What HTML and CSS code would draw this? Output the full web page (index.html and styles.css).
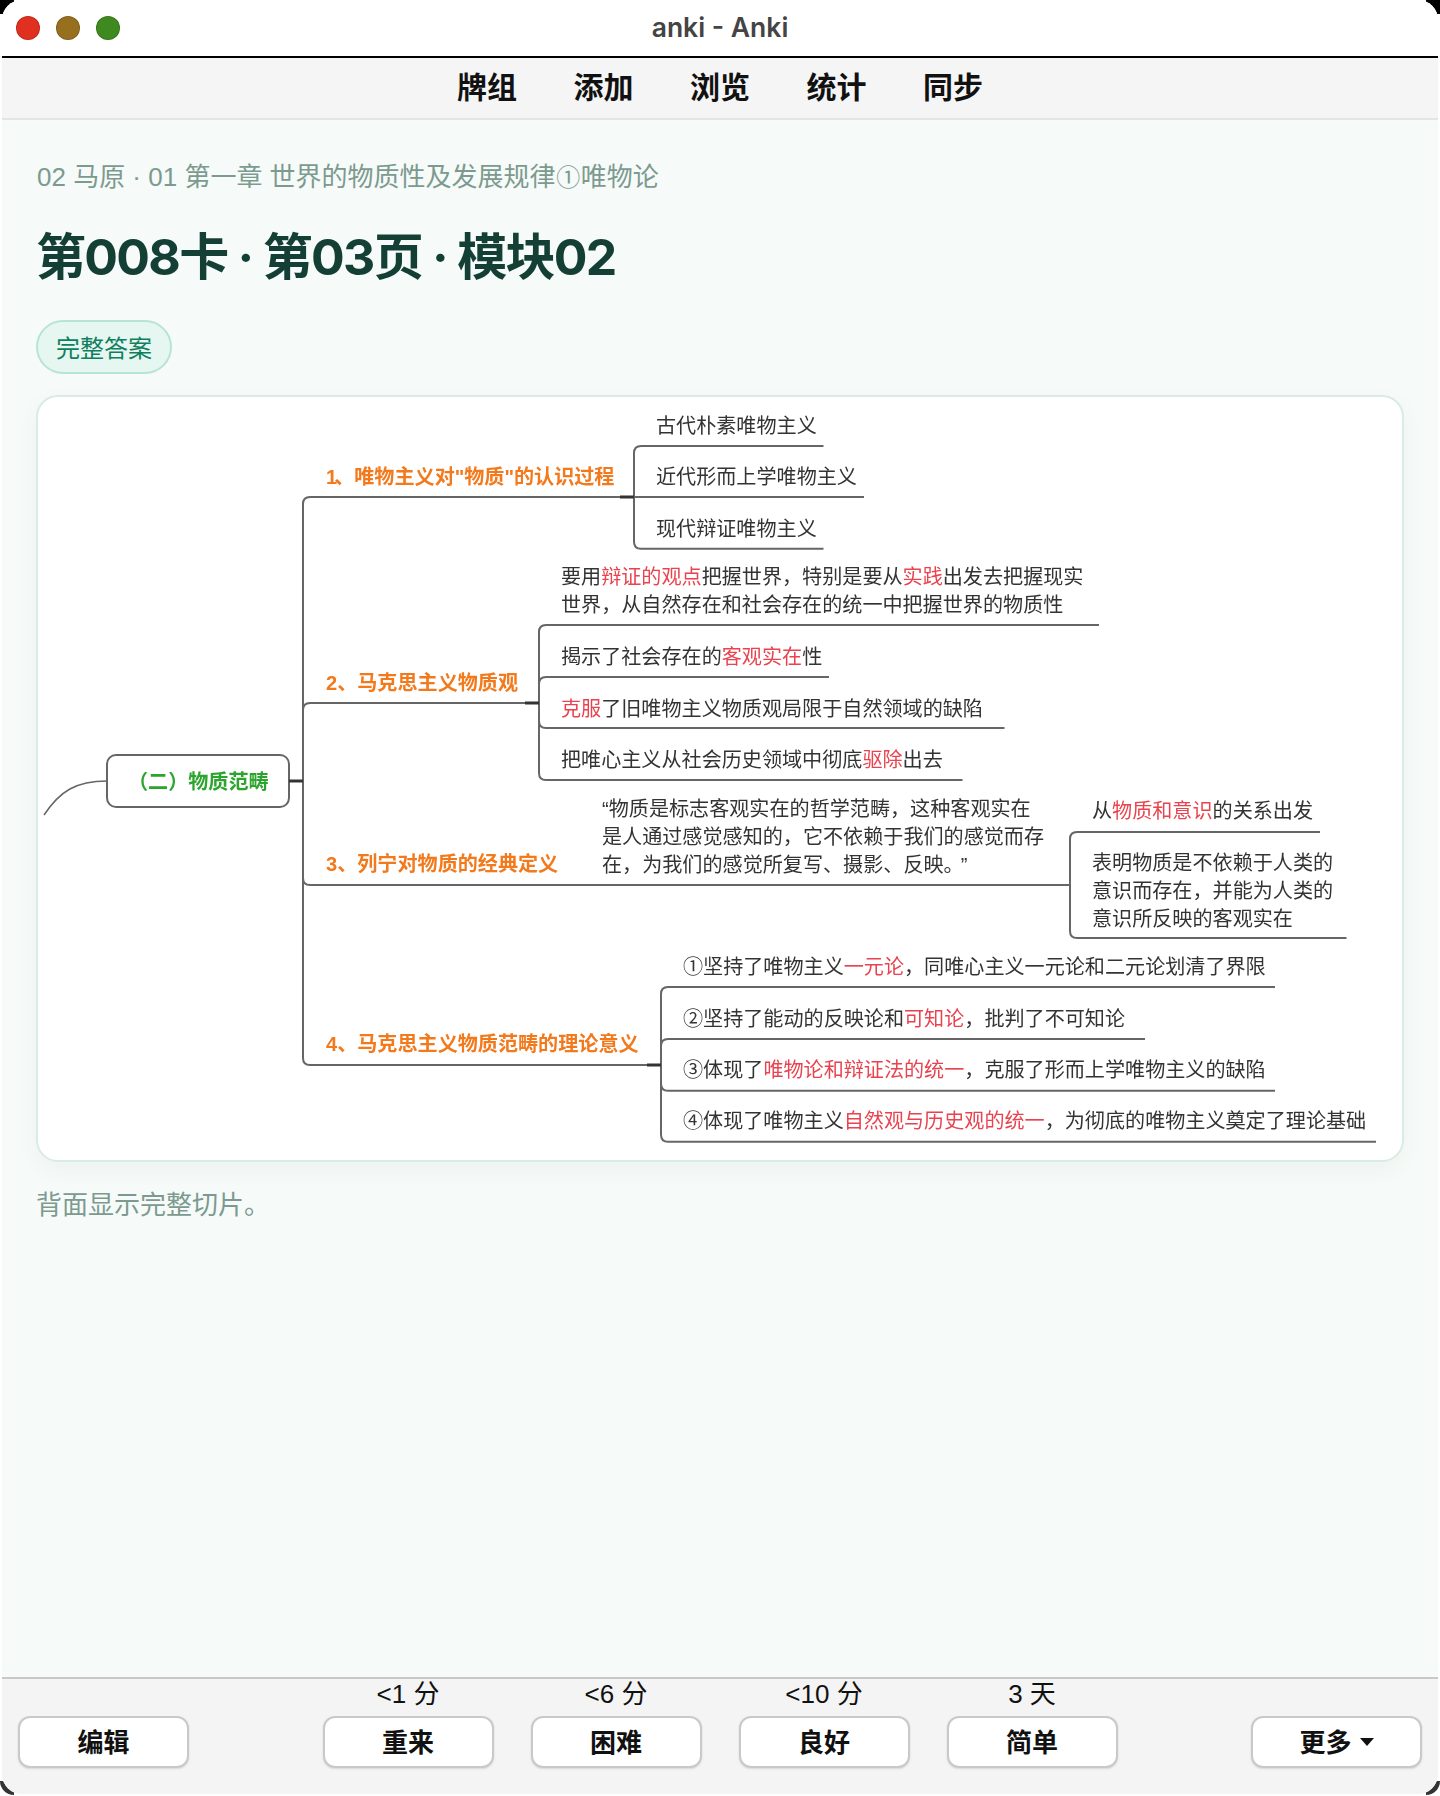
FILE: index.html
```html
<!DOCTYPE html>
<html lang="zh-CN">
<head>
<meta charset="utf-8">
<title>anki - Anki</title>
<link rel="stylesheet" href="styles.css">
</head>
<body>
<i class="corner c-tl"></i><i class="corner c-tr"></i><i class="corner c-bl"></i><i class="corner c-br"></i>
<div class="window">
  <header class="titlebar">
    <div class="lights"><span class="light red"></span><span class="light amber"></span><span class="light green"></span></div>
    <div class="wintitle">anki - Anki</div>
  </header>
  <nav class="toolbar">
    <a>牌组</a><a>添加</a><a>浏览</a><a>统计</a><a>同步</a>
  </nav>
  <main class="content">
    <div class="crumb">02 马原 · 01 第一章 世界的物质性及发展规律<span class="circled">①</span>唯物论</div>
    <h1 class="heading">第008卡 · 第03页 · 模块02</h1>
    <div class="pill">完整答案</div>
    <section class="card">
      <div class="map">
        <svg class="wires" viewBox="38 398 1363 762" width="1363" height="762" fill="none">
          <g class="line">
            <path d="M634 497H310Q303 497 303 504V1058Q303 1065 310 1065H661"/>
            <path d="M303 710Q303 703 310 703H539"/>
            <path d="M303 878Q303 885 310 885H1070"/>
            <path d="M823.5 446H641Q634 446 634 453V541.7Q634 548.7 641 548.7H823.5"/>
            <path d="M634 497H864"/>
            <path d="M1099 625H546Q539 625 539 632V773Q539 780 546 780H962.5"/>
            <path d="M539 684Q539 677 546 677H829"/>
            <path d="M539 721Q539 728 546 728H1004.5"/>
            <path d="M1320 832H1077Q1070 832 1070 839V931Q1070 938 1077 938H1346.5"/>
            <path d="M1275 987H668Q661 987 661 994V1134.7Q661 1141.7 668 1141.7H1376"/>
            <path d="M661 1046Q661 1039 668 1039H1145"/>
            <path d="M661 1083.7Q661 1090.7 668 1090.7H1275"/>
            <rect x="107" y="755" width="182" height="52" rx="9"/>
          </g>
          <g class="stub">
            <path d="M289 781H303"/>
            <path d="M620 497H634"/>
            <path d="M525 703H539"/>
            <path d="M647 1065H661"/>
          </g>
          <path class="thin" d="M107 781C76 781 60 791 44 815"/>
        </svg>
        <span class="node root n-root">（二）物质范畴</span>
        <span class="node head n-o1"><span class="narrow">1</span>、唯物主义对"物质"的认识过程</span>
        <span class="node head n-o2">2、马克思主义物质观</span>
        <span class="node head n-o3">3、列宁对物质的经典定义</span>
        <span class="node head n-o4">4、马克思主义物质范畴的理论意义</span>
        <span class="node n-a1">古代朴素唯物主义</span>
        <span class="node n-a2">近代形而上学唯物主义</span>
        <span class="node n-a3">现代辩证唯物主义</span>
        <span class="node n-b1">要用<em>辩证的观点</em>把握世界，特别是要从<em>实践</em>出发去把握现实<br>世界，从自然存在和社会存在的统一中把握世界的物质性</span>
        <span class="node n-b2">揭示了社会存在的<em>客观实在</em>性</span>
        <span class="node n-b3"><em>克服</em>了旧唯物主义物质观局限于自然领域的缺陷</span>
        <span class="node n-b4">把唯心主义从社会历史领域中彻底<em>驱除</em>出去</span>
        <span class="node n-q">“物质是标志客观实在的哲学范畴，这种客观实在<br>是人通过感觉感知的，它不依赖于我们的感觉而存<br>在，为我们的感觉所复写、摄影、反映。<span class="closing">”</span></span>
        <span class="node n-c1">从<em>物质和意识</em>的关系出发</span>
        <span class="node n-c2">表明物质是不依赖于人类的<br>意识而存在，并能为人类的<br>意识所反映的客观实在</span>
        <span class="node n-d1">①坚持了唯物主义<em>一元论</em>，同唯心主义一元论和二元论划清了界限</span>
        <span class="node n-d2">②坚持了能动的反映论和<em>可知论</em>，批判了不可知论</span>
        <span class="node n-d3">③体现了<em>唯物论和辩证法的统一</em>，克服了形而上学唯物主义的缺陷</span>
        <span class="node n-d4">④体现了唯物主义<em>自然观与历史观的统一</em>，为彻底的唯物主义奠定了理论基础</span>
      </div>
    </section>
    <p class="note">背面显示完整切片。</p>
  </main>
  <footer class="actions">
    <button class="btn">编辑</button>
    <div class="answers">
      <div class="answer"><span class="due">&lt;1 分</span><button class="btn">重来</button></div>
      <div class="answer"><span class="due">&lt;6 分</span><button class="btn">困难</button></div>
      <div class="answer"><span class="due">&lt;10 分</span><button class="btn">良好</button></div>
      <div class="answer"><span class="due">3 天</span><button class="btn">简单</button></div>
    </div>
    <button class="btn more">更多<i class="caret"></i></button>
  </footer>
</div>
</body>
</html>
```
FILE: styles.css
```css
* { box-sizing: border-box; }
html, body { margin: 0; height: 1796px; background: #fff; }
body {
  position: relative;
  font-family: "Liberation Sans", "Noto Sans CJK SC", sans-serif;
  overflow: hidden;
}
.corner { position: absolute; width: 14px; height: 14px; background: #000; }
.c-tl { left: 0; top: 0; }
.c-tr { right: 0; top: 0; }
.c-bl { left: 0; bottom: 1px; border-bottom-left-radius: 20px; background: #333; }
.c-br { right: 0; bottom: 1px; border-bottom-right-radius: 20px; background: #333; }

.window {
  position: relative;
  margin: 0 2px;
  width: 1436px;
  height: 1794px;
  border-radius: 20px;
  overflow: hidden;
  display: flex;
  flex-direction: column;
  background: #f6faf8;
}

.titlebar {
  position: relative;
  flex: none;
  height: 58px;
  background: #fff;
  border-bottom: 2px solid #000;
  display: flex;
  align-items: center;
  justify-content: center;
}
.lights { position: absolute; left: 14px; top: 16px; display: flex; gap: 16px; }
.light { width: 24px; height: 24px; border-radius: 50%; border: 1px solid rgba(0, 0, 0, .15); }
.red { background: #e0301f; }
.amber { background: #97701f; }
.green { background: #3e8a20; }
.wintitle {
  font-family: Inter, "Liberation Sans", sans-serif;
  font-weight: 600;
  font-size: 26.5px;
  line-height: 52px;
  height: 54px;
  color: #444;
}

.toolbar {
  flex: none;
  height: 62px;
  background: #f5f5f5;
  border-bottom: 2px solid #e4e4e4;
  display: flex;
  justify-content: center;
  align-items: center;
  gap: 56.5px;
  padding-bottom: 1px;
}
.toolbar a { font-size: 30px; font-weight: 700; line-height: 40px; color: #111; }

.content { flex: 1; padding: 39px 34px 0 34px; min-height: 0; }
.crumb { height: 36px; margin-left: 1px; font-size: 26px; line-height: 36px; color: #7c9a90; }
.circled { font-size: 24px; margin: 0 .5px; }
.heading {
  height: 60px;
  margin: 32px 0 33px;
  font-family: Inter, "Noto Sans CJK SC", sans-serif;
  font-size: 50px;
  line-height: 60px;
  font-weight: 700;
  letter-spacing: -1.7px;
  color: #133f34;
}
.pill {
  display: inline-flex;
  align-items: center;
  height: 54px;
  padding: 0 18px 2px;
  border: 2px solid #b7e4d3;
  border-radius: 27px;
  background: #e6f6f0;
  color: #0f7f5f;
  font-size: 24px;
  vertical-align: top;
}
.card {
  margin-top: 21px;
  height: 767px;
  background: #fff;
  border: 2px solid #d8ebe4;
  border-radius: 22px;
  box-shadow: 0 8px 24px rgba(20, 70, 55, .04);
}
.map { position: relative; margin-top: 1px; width: 1363px; height: 762px; filter: blur(.35px); }
.wires { position: absolute; left: 0; top: 0; }
.line { stroke: #666; stroke-width: 2; }
.stub { stroke: #333; stroke-width: 3; }
.thin { stroke: #666; stroke-width: 1.5; }

.node {
  position: absolute;
  white-space: nowrap;
  font-size: 20.1px;
  line-height: 28px;
  color: #333;
}
.node em { font-style: normal; color: #e8434f; }
.closing { margin-left: 7px; }
.head { color: #f2791c; font-weight: 700; }
.narrow { letter-spacing: -3px; }
.root { color: #2ba52d; font-weight: 700; }
.n-root { left: 90px; top: 370px; }
.n-o1 { left: 288px; top: 65px; }
.n-o2 { left: 288px; top: 271px; }
.n-o3 { left: 288px; top: 452px; }
.n-o4 { left: 288px; top: 632px; }
.n-a1 { left: 618px; top: 14px; }
.n-a2 { left: 618px; top: 65px; }
.n-a3 { left: 618px; top: 117px; }
.n-b1 { left: 523px; top: 165px; }
.n-b2 { left: 523px; top: 245px; }
.n-b3 { left: 523px; top: 297px; }
.n-b4 { left: 523px; top: 348px; }
.n-q { left: 564px; top: 397px; }
.n-c1 { left: 1054px; top: 399px; }
.n-c2 { left: 1054px; top: 451px; }
.n-d1 { left: 645px; top: 555px; }
.n-d2 { left: 645px; top: 607px; }
.n-d3 { left: 645px; top: 658px; }
.n-d4 { left: 645px; top: 709px; }

.note { margin: 25px 0 0; font-size: 26px; line-height: 36px; color: #7c9a90; }

.actions {
  flex: none;
  height: 117px;
  border-top: 2px solid #c8c8c8;
  background: #f4f4f4;
  display: flex;
  justify-content: space-between;
  align-items: flex-end;
  padding: 0 16px 26px;
}
.answers { display: flex; gap: 37px; }
.answer { display: flex; flex-direction: column; align-items: center; }
.due { font-size: 26px; line-height: 30px; margin-bottom: 7px; color: #111; }
.btn {
  width: 171px;
  height: 52px;
  padding: 0 0 4px;
  border: 2px solid #c9c9c9;
  border-radius: 12px;
  background: #fff;
  box-shadow: 0 1px 2px rgba(0, 0, 0, .12);
  font-family: inherit;
  font-size: 26px;
  font-weight: 700;
  color: #111;
  display: flex;
  align-items: center;
  justify-content: center;
}
.caret {
  margin: 4px 0 0 8px;
  width: 0;
  height: 0;
  border-left: 7.5px solid transparent;
  border-right: 7.5px solid transparent;
  border-top: 8px solid #111;
}
```
